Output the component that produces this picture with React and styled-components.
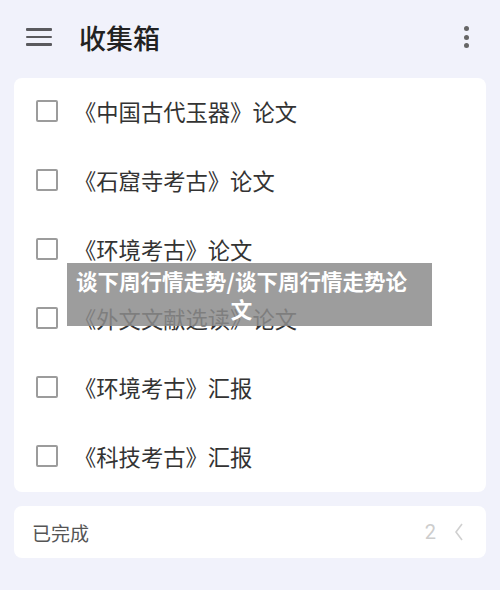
import React from "react";
import styled, { createGlobalStyle } from "styled-components";

const Global = createGlobalStyle`
  html, body { margin: 0; padding: 0; }
  body {
    background: #f1f2fb;
    font-family: "Noto Sans CJK SC", "Noto Sans", sans-serif;
  }
`;

const Page = styled.div`
  position: relative;
  width: 500px;
  height: 590px;
  background: #f1f2fb;
  box-sizing: border-box;
  padding: 0 14px;
  display: flex;
  flex-direction: column;
`;

const Header = styled.header`
  height: 78px;
  box-sizing: border-box;
  display: flex;
  align-items: center;
  padding: 0 12px 4px 12px;
`;

const MenuIcon = styled.div`
  width: 26px;
  display: flex;
  flex-direction: column;
  gap: 5px;
  span {
    display: block;
    height: 2.5px;
    background: #5a5a5e;
    border-radius: 1px;
  }
`;

const Title = styled.h1`
  margin: 0 0 0 27px;
  font-size: 27px;
  font-weight: 500;
  color: #222;
  flex: 1;
`;

const Kebab = styled.div`
  display: flex;
  flex-direction: column;
  gap: 3.5px;
  margin-right: 5px;
  span {
    width: 5px;
    height: 5px;
    border-radius: 50%;
    background: #666;
  }
`;

const Card = styled.section`
  background: #fff;
  border-radius: 8px;
  width: 472px;
`;

const Row = styled.label`
  height: 69px;
  box-sizing: border-box;
  display: flex;
  align-items: center;
  padding: 0 0 4px 22px;
  gap: 16px;
`;

const Box = styled.span`
  width: 18px;
  height: 18px;
  border: 2px solid #9c9c9c;
  border-radius: 2px;
  flex: none;
`;

const ItemText = styled.span`
  font-size: 22.3px;
  color: #333;
`;

const DoneCard = styled(Card)`
  margin-top: 14px;
  height: 52px;
  display: flex;
  align-items: center;
  padding: 0 22px 0 18px;
  box-sizing: border-box;
`;

const DoneLabel = styled.span`
  flex: 1;
  font-size: 19px;
  color: #555;
`;

const Count = styled.span`
  font-size: 20px;
  color: #cdcdcd;
  margin-right: 18px;
  font-family: "Roboto", sans-serif;
`;

const Banner = styled.div`
  position: absolute;
  left: 67px;
  top: 263px;
  width: 365px;
  height: 63px;
  box-sizing: border-box;
  background: rgba(140, 140, 140, 0.85);
  color: #fff;
  font-weight: 700;
  font-size: 21.5px;
  line-height: 28px;
  text-align: center;
  padding: 4px 24px 0 8px;
`;

const items = [
  "《中国古代玉器》论文",
  "《石窟寺考古》论文",
  "《环境考古》论文",
  "《外文文献选读》论文",
  "《环境考古》汇报",
  "《科技考古》汇报",
];

export default function App() {
  return (
    <Page>
      <Global />
      <Header>
        <MenuIcon>
          <span />
          <span />
          <span />
        </MenuIcon>
        <Title>收集箱</Title>
        <Kebab>
          <span />
          <span />
          <span />
        </Kebab>
      </Header>
      <Card>
        {items.map((t, i) => (
          <Row key={i}>
            <Box />
            <ItemText>{t}</ItemText>
          </Row>
        ))}
      </Card>
      <DoneCard>
        <DoneLabel>已完成</DoneLabel>
        <Count>2</Count>
        <svg width="10" height="20" viewBox="0 0 10 20">
          <path d="M8 2 L2 10 L8 18" fill="none" stroke="#d0d0d0" strokeWidth="1.6" />
        </svg>
      </DoneCard>
      <Banner>谈下周行情走势/谈下周行情走势论文</Banner>
    </Page>
  );
}
